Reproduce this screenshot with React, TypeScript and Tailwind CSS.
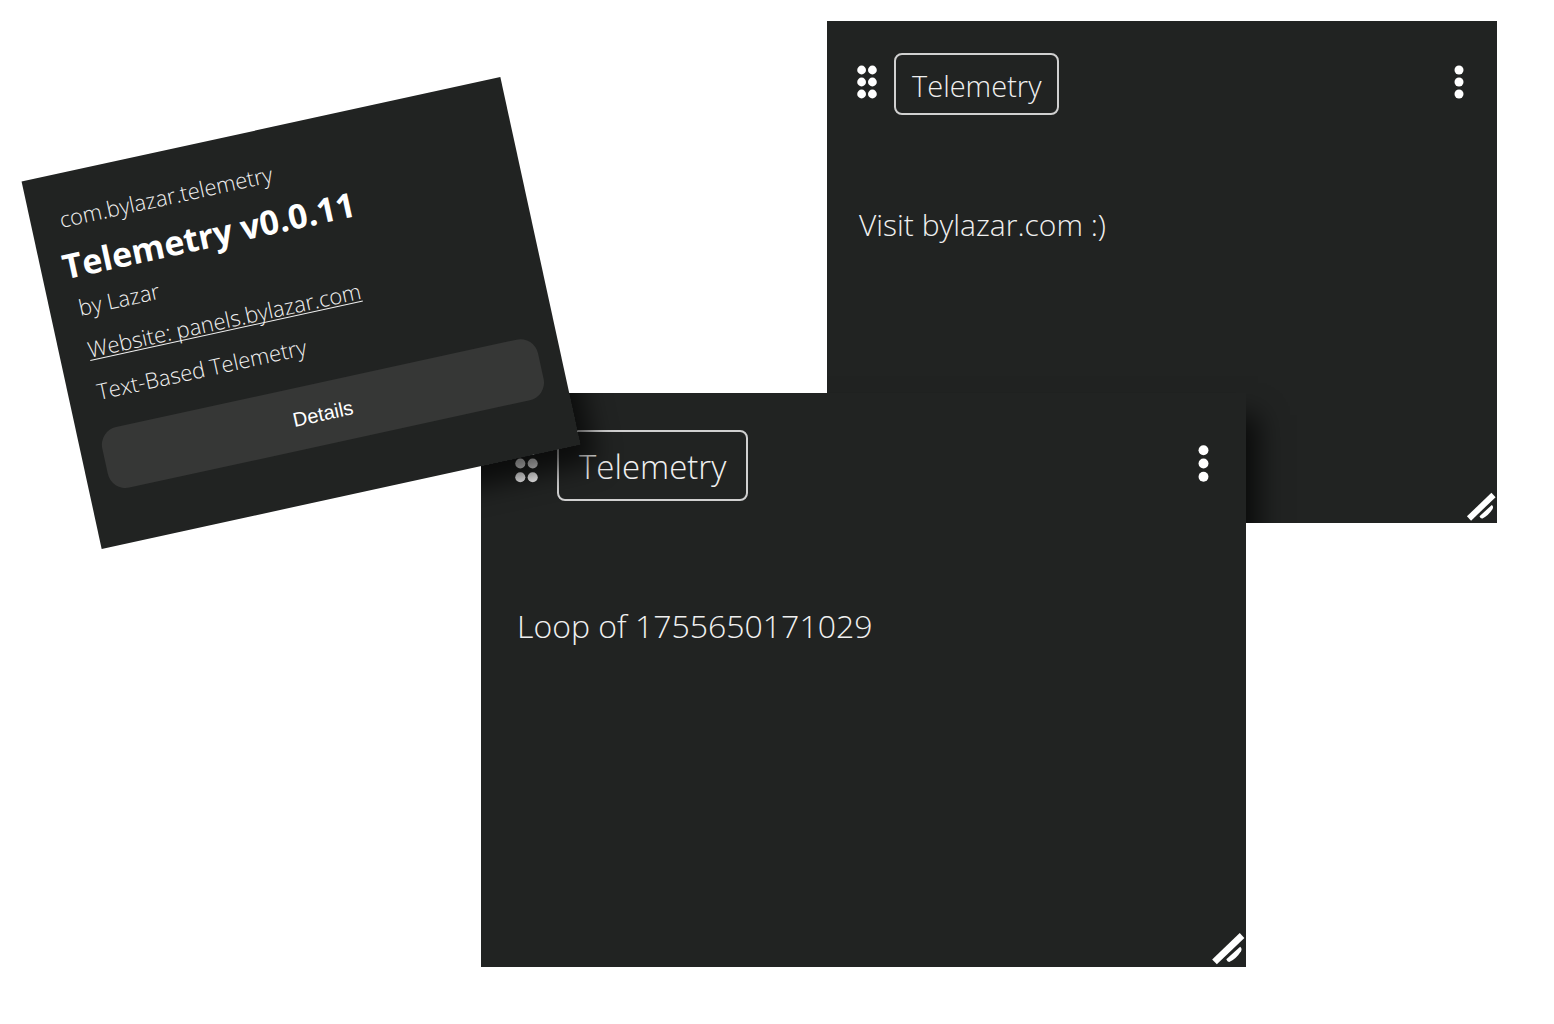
import React from "react";

function GripIcon({ className }: { className: string }) {
  return (
    <svg viewBox="0 0 20 34" className={className} fill="currentColor" aria-hidden="true">
      {[5, 17, 29].map((y) => (
        <React.Fragment key={y}>
          <circle cx="4.6" cy={y} r="4.4" />
          <circle cx="15.4" cy={y} r="4.4" />
        </React.Fragment>
      ))}
    </svg>
  );
}

function MenuIcon({ className }: { className: string }) {
  return (
    <svg viewBox="0 0 10 34" className={className} fill="currentColor" aria-hidden="true">
      <circle cx="5" cy="5" r="4.5" />
      <circle cx="5" cy="17" r="4.5" />
      <circle cx="5" cy="29" r="4.5" />
    </svg>
  );
}

function ResizeHandle({ className }: { className: string }) {
  return (
    <svg viewBox="0 0 32 32" className={className} aria-hidden="true">
      <path d="M4 27.5 L28.5 4" stroke="#fff" strokeWidth="6" fill="none" />
      <path d="M14.5 25.2 L26.8 14 Q28.8 15.5 27.6 18 Q23.5 24.5 17.5 27.4 Q15.5 27.8 14.5 25.2 Z" fill="#fff" />
    </svg>
  );
}

type PanelProps = {
  className: string;
  headerClass: string;
  gripClass: string;
  tagClass: string;
  menuClass: string;
  bodyClass: string;
  handleClass: string;
  text: string;
  children?: React.ReactNode;
};

function Panel(p: PanelProps) {
  return (
    <section className={`absolute overflow-hidden bg-[#212322] text-[#f0f0f0] ${p.className}`}>
      <header className={`flex items-center ${p.headerClass}`}>
        <button type="button" aria-label="Move panel" className="pb-1 text-white">
          <GripIcon className={p.gripClass} />
        </button>
        <button type="button" className={`border-2 border-[#d0d0d0] pt-[3px] font-light ${p.tagClass}`}>
          Telemetry
        </button>
        <button type="button" aria-label="Panel menu" className="ml-auto pb-1 text-white">
          <MenuIcon className={p.menuClass} />
        </button>
      </header>
      <p className={`font-light ${p.bodyClass}`}>{p.text}</p>
      <ResizeHandle className={`absolute right-0 bottom-0 ${p.handleClass}`} />
      {p.children}
    </section>
  );
}

export default function App() {
  return (
    <main className="relative min-h-screen w-full overflow-hidden bg-white font-['Open_Sans','Noto_Sans',sans-serif]">
      <Panel
        className="top-[21px] left-[827px] h-[502px] w-[670px]"
        headerClass="gap-[17px] pt-8 pr-[33px] pl-[30px]"
        gripClass="h-[34px] w-5"
        tagClass="h-[62px] rounded-lg px-4 text-[29px]"
        menuClass="h-[34px] w-[10px]"
        bodyClass="px-8 pt-[88px] text-[30px] leading-[44px]"
        handleClass="size-8"
        text="Visit bylazar.com :)"
      >
        <div className="pointer-events-none absolute top-[372px] -left-[346px] h-[574px] w-[765px] shadow-[12px_22px_26px_rgba(0,0,0,0.7)]" />
      </Panel>

      <Panel
        className="top-[393px] left-[481px] h-[574px] w-[765px]"
        headerClass="gap-[19px] pt-[37px] pr-[37px] pl-[34px]"
        gripClass="h-[39px] w-[23px]"
        tagClass="h-[71px] rounded-lg px-5 text-[33px]"
        menuClass="h-[39px] w-[11px]"
        bodyClass="px-9 pt-[100px] text-[32px] leading-[50px]"
        handleClass="size-9"
        text="Loop of 1755650171029"
      >
        <div className="pointer-events-none absolute -top-[268px] -left-[425px] h-[376px] w-[490px] -rotate-[12.3deg] shadow-[12px_20px_26px_rgba(0,0,0,0.65)]" />
      </Panel>

      <article className="absolute top-[125px] left-[56px] h-[376px] w-[490px] -rotate-[12.3deg] bg-[#212322] px-[22px] pt-[29px] text-[22px] font-light text-[#f0f0f0]">
        <p className="pl-[7px] leading-8">com.bylazar.telemetry</p>
        <h2 className="mt-[10px] text-[34px] leading-[43px] font-bold text-white">Telemetry v0.0.11</h2>
        <div className="flex flex-col pl-[7px] leading-[43px]">
          <p>by Lazar</p>
          <a
            href="https://panels.bylazar.com"
            className="self-start underline decoration-1 underline-offset-2 [text-decoration-skip-ink:none]"
          >
            Website: panels.bylazar.com
          </a>
          <p>Text-Based Telemetry</p>
        </div>
        <button
          type="button"
          className="mt-[17px] h-[62px] w-full rounded-[18px] bg-[#363736] font-['Liberation_Sans',sans-serif] text-[20px] font-normal text-white"
        >
          Details
        </button>
      </article>
    </main>
  );
}
